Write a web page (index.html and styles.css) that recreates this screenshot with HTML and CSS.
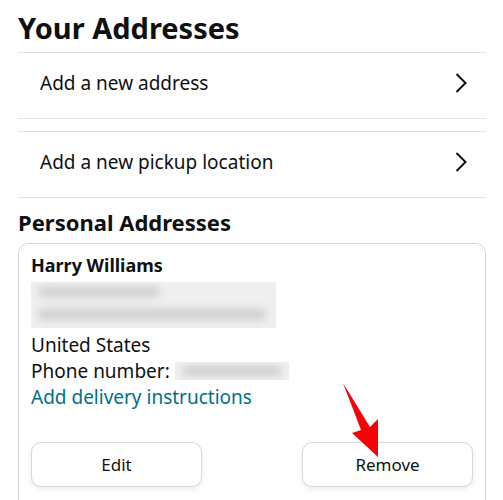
FILE: index.html
```html
<!DOCTYPE html>
<html lang="en">
<head>
<meta charset="UTF-8">
<meta name="viewport" content="width=device-width, initial-scale=1.0">
<title>Your Addresses</title>
<link rel="stylesheet" href="styles.css">
</head>
<body>

<div class="page">
  <h1 class="title">Your Addresses</h1>

  <div class="menu">
    <div class="menu-row">
      <span>Add a new address</span>
      <svg class="chevron" width="12" height="20" viewBox="0 0 12 20"><path d="M1.5 1 L10.5 10 L1.5 19" fill="none" stroke="#0f1111" stroke-width="2"/></svg>
    </div>
  </div>

  <div class="menu">
    <div class="menu-row">
      <span>Add a new pickup location</span>
      <svg class="chevron" width="12" height="20" viewBox="0 0 12 20"><path d="M1.5 1 L10.5 10 L1.5 19" fill="none" stroke="#0f1111" stroke-width="2"/></svg>
    </div>
  </div>

  <h2 class="section-title">Personal Addresses</h2>

  <div class="card">
    <div class="name">Harry Williams</div>
    <div class="blurred address">
      <div class="smudge s1"></div>
      <div class="smudge s2"></div>
    </div>
    <div class="line">United States</div>
    <div class="line">Phone number: <span class="blurred phone"><span class="smudge s3"></span></span></div>
    <a class="link" href="#">Add delivery instructions</a>
    <div class="actions">
      <button class="btn">Edit</button>
      <button class="btn">Remove</button>
    </div>
  </div>

  <!-- annotation arrow -->
  <svg class="arrow" width="60" height="90" viewBox="0 0 60 90">
    <polygon points="3,4 30,48 38,40 38,78 12,54 21,51" fill="#f5030a"/>
  </svg>
</div>

</body>
</html>
```

FILE: styles.css
```css
body {
  font-family: "Noto Sans", "Open Sans", sans-serif;
  margin: 0;
  padding: 0;
  background-color: #fff;
  color: #0f1111;
}
.page {
  position: relative;
  padding: 0 17px 0 18px;
}
.title {
  margin: 0;
  padding-top: 10px;
  height: 42px;
  font-size: 29px;
  line-height: 36px;
  font-weight: 700;
}
.menu {
  border-top: 1px solid #e0e2e2;
  border-bottom: 1px solid #e0e2e2;
  margin-bottom: 12px;
}
.menu-row {
  height: 59px;
  padding: 0 19px 6px 22px;
  display: flex;
  align-items: center;
  justify-content: space-between;
  font-size: 19px;
}
.section-title {
  margin: 0;
  height: 33px;
  font-size: 22px;
  line-height: 24px;
  font-weight: 700;
}
.card {
  border: 1px solid #d5d9d9;
  border-radius: 10px;
  padding: 8px 12px 30px 12px;
  height: 300px;
}
.name {
  font-size: 18px;
  font-weight: 700;
  line-height: 26px;
}
.blurred {
  background-color: #efefef;
  overflow: hidden;
  position: relative;
}
.address {
  width: 245px;
  height: 46px;
  margin: 4px 0 4px 0;
}
.smudge {
  position: absolute;
  background-color: #c9c9c9;
  filter: blur(4px);
}
.s1 {
  left: 8px;
  top: 6px;
  width: 120px;
  height: 8px;
}
.s2 {
  left: 8px;
  top: 28px;
  width: 226px;
  height: 9px;
}
.line {
  font-size: 19px;
  line-height: 26px;
}
.phone {
  display: inline-block;
  width: 114px;
  height: 18px;
  vertical-align: -2px;
}
.s3 {
  left: 8px;
  top: 5px;
  width: 98px;
  height: 8px;
}
.link {
  display: block;
  font-size: 19px;
  line-height: 26px;
  color: #007185;
  text-decoration: none;
}
.actions {
  display: flex;
  justify-content: space-between;
  margin-top: 32px;
}
.btn {
  width: 171px;
  height: 45px;
  border: 1px solid #d5d9d9;
  border-radius: 10px;
  background-color: #fff;
  box-shadow: 0 2px 5px rgba(213, 217, 217, 0.5);
  font-family: "Noto Sans", "Open Sans", sans-serif;
  font-size: 17px;
  color: #0f1111;
}
.arrow {
  position: absolute;
  left: 340px;
  top: 379px;
}
```
